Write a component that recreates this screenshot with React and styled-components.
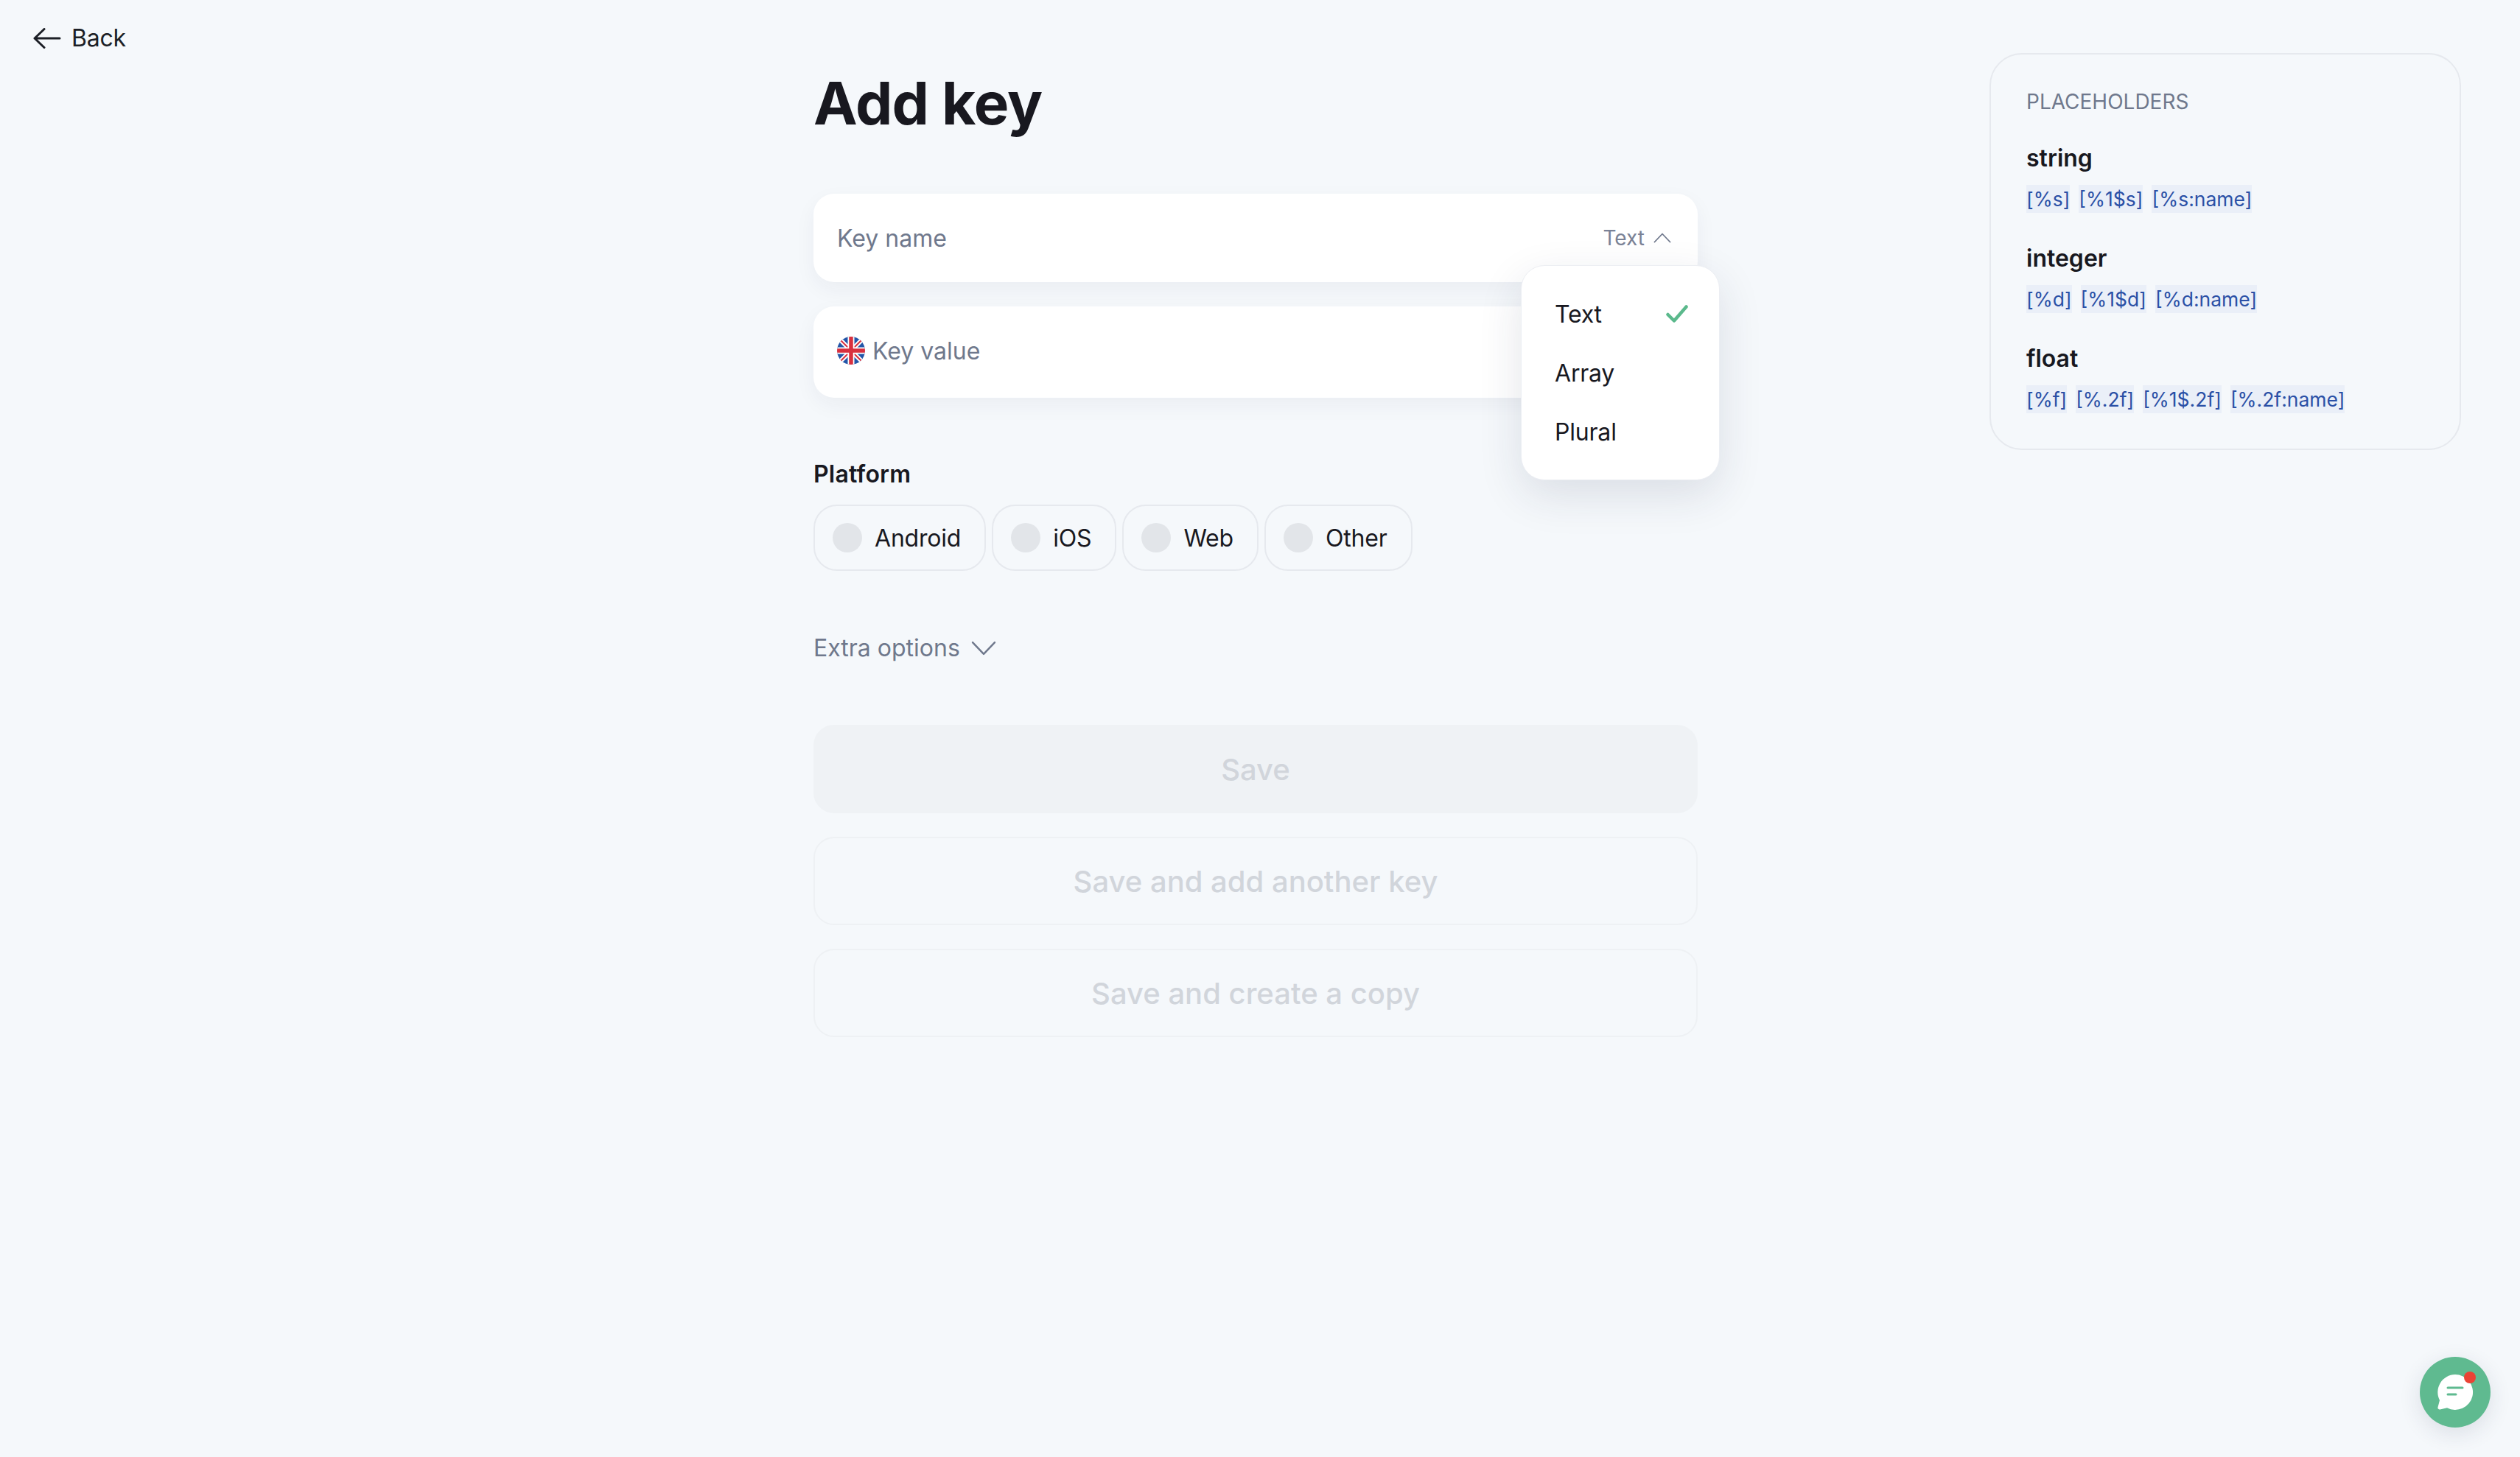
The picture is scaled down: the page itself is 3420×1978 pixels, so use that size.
import React from 'react';
import styled, { createGlobalStyle } from 'styled-components';

const GlobalStyle = createGlobalStyle`
  html, body {
    margin: 0;
    height: 100%;
    background: #f5f8fb;
    font-family: Inter, "Noto Sans", sans-serif;
    color: #18181f;
  }
  * {
    box-sizing: border-box;
  }
`;

const Page = styled.div`
  position: relative;
  height: 1978px;
  overflow: hidden;
  display: grid;
  grid-template-columns: 1104px 1200px 396px 640px;
  align-items: start;
`;

const BackLink = styled.a`
  display: inline-flex;
  align-items: center;
  gap: 14px;
  margin: 32px 0 0 45px;
  font-size: 32px;
  line-height: 40px;
  letter-spacing: -0.2px;
  color: #1c1f26;
`;

const Main = styled.main`
  padding-top: 92px;
`;

const Title = styled.h1`
  margin: 0 0 75px;
  font-size: 80px;
  line-height: 96px;
  font-weight: 700;
  letter-spacing: -0.9px;
  color: #18181f;
`;

const Field = styled.div`
  position: relative;
  display: flex;
  align-items: center;
  gap: 10px;
  height: ${p => p.$height}px;
  margin-bottom: ${p => p.$mb || 0}px;
  padding: 0 36px ${p => p.$pb || 0}px 32px;
  background: #fff;
  border-radius: 28px;
  box-shadow: 0 10px 28px rgba(30, 40, 70, 0.05);
`;

const FieldInput = styled.input`
  flex: 1;
  min-width: 0;
  border: 0;
  outline: 0;
  padding: 0;
  background: transparent;
  font: 400 32px Inter, sans-serif;
  color: #18181f;

  &::placeholder {
    color: #6f788c;
    opacity: 1;
  }
`;

const TypeToggle = styled.div`
  display: flex;
  align-items: center;
  gap: 12px;
  font-size: 28px;
  color: #7a8296;
`;

const Menu = styled.ul`
  position: absolute;
  top: 97px;
  right: -30px;
  z-index: 2;
  width: 270px;
  height: 292px;
  margin: 0;
  padding: 25px 0 0;
  list-style: none;
  background: #fff;
  border: 1px solid #eceef3;
  border-radius: 32px;
  box-shadow: 0 20px 60px rgba(30, 40, 70, 0.12);
`;

const MenuItem = styled.li`
  display: flex;
  align-items: center;
  justify-content: space-between;
  height: 80px;
  padding: 0 42px 0 45px;
  font-size: 32px;
  letter-spacing: -0.2px;
  color: #18181f;
`;

const SectionLabel = styled.div`
  margin: 84px 0 21px;
  font-size: 32px;
  line-height: 40px;
  font-weight: 600;
  letter-spacing: 0.2px;
  color: #18181f;
`;

const PillRow = styled.div`
  display: flex;
  gap: 8px;
`;

const Pill = styled.label`
  display: flex;
  align-items: center;
  gap: 17px;
  height: 90px;
  padding: 0 32px 0 24px;
  border: 2px solid #e6e9ee;
  border-radius: 32px;
  font-size: 32px;
  letter-spacing: -0.2px;
  color: #18181f;
`;

const Radio = styled.span`
  width: 40px;
  height: 40px;
  border-radius: 50%;
  background: #e2e5e9;
`;

const ExtraOptions = styled.div`
  display: flex;
  align-items: center;
  gap: 13px;
  margin: 85px 0 84px;
  font-size: 32px;
  line-height: 40px;
  color: #6f788c;
`;

const ButtonStack = styled.div`
  display: flex;
  flex-direction: column;
  gap: 32px;
`;

const ActionButton = styled.button`
  height: 120px;
  border: 2px solid ${p => (p.$primary ? '#eff2f5' : '#eef1f4')};
  border-radius: 28px;
  background: ${p => (p.$primary ? '#eff2f5' : 'transparent')};
  font: 500 40px Inter, sans-serif;
  color: #d1d5db;
`;

const Aside = styled.aside`
  grid-column: 4;
  height: 539px;
  margin-top: 72px;
  padding: 46px 48px 0;
  border: 2px solid #e6e9ee;
  border-radius: 44px;
`;

const AsideTitle = styled.div`
  margin-bottom: 39px;
  font-size: 28px;
  line-height: 36px;
  color: #6f788c;
  text-transform: uppercase;
`;

const Group = styled.section`
  margin-bottom: 42px;
`;

const GroupName = styled.div`
  margin-bottom: 16px;
  font-size: 32px;
  line-height: 40px;
  font-weight: 600;
  color: #18181f;
`;

const TagRow = styled.div`
  display: flex;
  gap: 12px;
`;

const Tag = styled.code`
  height: 38px;
  background: #eaeff8;
  font: 400 26.500px/38px Inter, sans-serif;
  color: #2a50a6;
`;

const ChatButton = styled.button`
  position: absolute;
  right: 40px;
  bottom: 40px;
  width: 96px;
  height: 96px;
  padding: 0;
  border: 0;
  border-radius: 50%;
  background: #5fba90;
  box-shadow: 0 8px 30px rgba(30, 40, 70, 0.12);
  display: flex;
  align-items: center;
  justify-content: center;
`;

const ChatDot = styled.span`
  position: absolute;
  top: 20px;
  right: 20px;
  width: 16px;
  height: 16px;
  border-radius: 50%;
  background: #ea4335;
`;

const placeholders = [
  { name: 'string', tags: ['[%s]', '[%1$s]', '[%s:name]'] },
  { name: 'integer', tags: ['[%d]', '[%1$d]', '[%d:name]'] },
  { name: 'float', tags: ['[%f]', '[%.2f]', '[%1$.2f]', '[%.2f:name]'] },
];

const BackArrow = () => (
  <svg width="38" height="28" viewBox="0 0 38 28" fill="none" stroke="#1c1f26" strokeWidth="3" strokeLinecap="round" strokeLinejoin="round">
    <path d="M2 14h34M15 1.500 2 14l13 12.500" />
  </svg>
);

const Chevron = ({ up, width, height, color, weight = 1.8 }) => (
  <svg width={width} height={height} viewBox="0 0 24 14" fill="none" stroke={color} strokeWidth={weight} strokeLinecap="round" strokeLinejoin="round">
    <path d={up ? 'M1.500 12.500 12 1.500l10.500 11' : 'M1.500 1.500 12 12.500l10.500-11'} />
  </svg>
);

const CheckMark = () => (
  <svg width="30" height="24" viewBox="0 0 30 24" fill="none" stroke="#5bb98c" strokeWidth="4.500" strokeLinecap="round" strokeLinejoin="round">
    <path d="M2.500 13l8.500 8.500L27.500 2.500" />
  </svg>
);

const UkFlag = () => (
  <svg width="38" height="38" viewBox="0 0 38 38" style={{ flexShrink: 0 }}>
    <defs>
      <clipPath id="flag-circle">
        <circle cx="19" cy="19" r="19" />
      </clipPath>
    </defs>
    <g clipPath="url(#flag-circle)">
      <rect width="38" height="38" fill="#2456a8" />
      <path d="M0 0l38 38M38 0L0 38" stroke="#fff" strokeWidth="6" />
      <path d="M0 0l38 38M38 0L0 38" stroke="#d8303f" strokeWidth="2" />
      <path d="M19 0v38M0 19h38" stroke="#fff" strokeWidth="9" />
      <path d="M19 0v38M0 19h38" stroke="#d8303f" strokeWidth="5.500" />
    </g>
  </svg>
);

const ChatIcon = () => (
  <svg width="50" height="50" viewBox="0 0 50 50">
    <path d="M25 1a24 24 0 1 1-11 45.300L4.500 48.500a2.500 2.500 0 0 1-3-3L4 36A24 24 0 0 1 25 1z" fill="#fff" />
    <path d="M15 19h20M15 28h11" stroke="#5fba90" strokeWidth="3" strokeLinecap="round" />
  </svg>
);

export default function App() {
  return (
    <Page>
      <GlobalStyle />
      <div>
        <BackLink>
          <BackArrow />
          Back
        </BackLink>
      </div>

      <Main>
        <Title>Add key</Title>
        <Field $height={120} $mb={33}>
          <FieldInput placeholder="Key name" />
          <TypeToggle>
            Text
            <Chevron up width={24} height={14} color="#6f788c" />
          </TypeToggle>
          <Menu>
            <MenuItem>
              Text
              <CheckMark />
            </MenuItem>
            <MenuItem>Array</MenuItem>
            <MenuItem>Plural</MenuItem>
          </Menu>
        </Field>
        <Field $height={124} $pb={4}>
          <UkFlag />
          <FieldInput placeholder="Key value" />
        </Field>

        <SectionLabel>Platform</SectionLabel>
        <PillRow>
          {['Android', 'iOS', 'Web', 'Other'].map(name => (
            <Pill key={name}>
              <Radio />
              {name}
            </Pill>
          ))}
        </PillRow>

        <ExtraOptions>
          Extra options
          <Chevron width={38} height={20} color="#6f788c" weight={1.7} />
        </ExtraOptions>

        <ButtonStack>
          <ActionButton $primary>Save</ActionButton>
          <ActionButton>Save and add another key</ActionButton>
          <ActionButton>Save and create a copy</ActionButton>
        </ButtonStack>
      </Main>

      <Aside>
        <AsideTitle>Placeholders</AsideTitle>
        {placeholders.map(group => (
          <Group key={group.name}>
            <GroupName>{group.name}</GroupName>
            <TagRow>
              {group.tags.map(tag => (
                <Tag key={tag}>{tag}</Tag>
              ))}
            </TagRow>
          </Group>
        ))}
      </Aside>

      <ChatButton>
        <ChatIcon />
        <ChatDot />
      </ChatButton>
    </Page>
  );
}
